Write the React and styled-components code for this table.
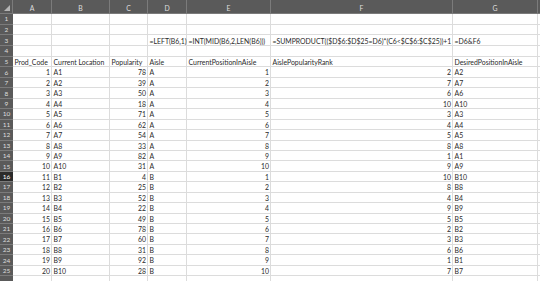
import React from "react";
import styled, { createGlobalStyle } from "styled-components";

const Global = createGlobalStyle`
  html, body {
    margin: 0;
    padding: 0;
    background: #ffffff;
    overflow: hidden;
  }
`;

const columns = ["A", "B", "C", "D", "E", "F", "G", ""];
const widths = [13, 39, 58, 38, 39, 84, 182, 85, 10];

const data = [
  [1, "A1", 78, "A", 1, 2, "A2"],
  [2, "A2", 39, "A", 2, 7, "A7"],
  [3, "A3", 50, "A", 3, 6, "A6"],
  [4, "A4", 18, "A", 4, 10, "A10"],
  [5, "A5", 71, "A", 5, 3, "A3"],
  [6, "A6", 62, "A", 6, 4, "A4"],
  [7, "A7", 54, "A", 7, 5, "A5"],
  [8, "A8", 33, "A", 8, 8, "A8"],
  [9, "A9", 82, "A", 9, 1, "A1"],
  [10, "A10", 31, "A", 10, 9, "A9"],
  [11, "B1", 4, "B", 1, 10, "B10"],
  [12, "B2", 25, "B", 2, 8, "B8"],
  [13, "B3", 52, "B", 3, 4, "B4"],
  [14, "B4", 22, "B", 4, 9, "B9"],
  [15, "B5", 49, "B", 5, 5, "B5"],
  [16, "B6", 78, "B", 6, 2, "B2"],
  [17, "B7", 60, "B", 7, 3, "B3"],
  [18, "B8", 31, "B", 8, 6, "B6"],
  [19, "B9", 92, "B", 9, 1, "B1"],
  [20, "B10", 28, "B", 10, 7, "B7"],
];

const top = [
  [],
  [],
  ["", "", "", "=LEFT(B6,1)", "=INT(MID(B6,2,LEN(B6)))", "=SUMPRODUCT(($D$6:$D$25=D6)*(C6<$C$6:$C$25))+1", "=D6&F6"],
  [],
  ["Prod_Code", "Current Location", "Popularity", "Aisle", "CurrentPositionInAisle", "AislePopularityRank", "DesiredPositionInAisle"],
];

const rows = [...top, ...data, []];

const Sheet = styled.div`
  display: grid;
  grid-template-columns: ${widths.map((w) => `${w}px`).join(" ")};
  grid-template-rows: 14px repeat(5, 10.7px) repeat(21, 10.45px);
  width: 540px;
  height: 281px;
  overflow: hidden;
  font-family: Lato, "Open Sans", "Liberation Sans", sans-serif;
  font-size: 6.9px;
  color: #2a2a2a;
`;

const Corner = styled.div`
  position: relative;
  background: #5a5a5a;
  border-right: 1px solid #7b7b7b;
  border-bottom: 1px solid #7b7b7b;

  &::after {
    content: "";
    position: absolute;
    right: 2px;
    bottom: 2px;
    border-left: 6px solid transparent;
    border-bottom: 6px solid #b5b5b5;
  }
`;

const ColHead = styled.div`
  background: #5a5a5a;
  color: #dedede;
  display: flex;
  align-items: center;
  justify-content: center;
  border-right: 1px solid #7b7b7b;
  border-bottom: 1px solid #7b7b7b;
  padding-top: 3px;
  box-sizing: border-box;
`;

const RowHead = styled.div`
  background: ${(p) => (p.active ? "#2b2b2b" : "#5a5a5a")};
  color: ${(p) => (p.active ? "#ffffff" : "#dedede")};
  display: flex;
  align-items: center;
  justify-content: center;
  border-bottom: 1px solid #7b7b7b;
  box-sizing: border-box;
  font-size: 6.5px;
`;

const Cell = styled.div`
  display: flex;
  align-items: flex-end;
  justify-content: ${(p) => (p.num ? "flex-end" : "flex-start")};
  padding: 0 1px 0.5px 1.5px;
  border-right: 1px solid #dcdcdc;
  border-bottom: 1px solid #dcdcdc;
  box-sizing: border-box;
  white-space: nowrap;
  overflow: visible;
  line-height: 1;
  min-width: 0;
`;

const App = () => (
  <>
    <Global />
    <Sheet>
      <Corner />
      {columns.map((c, i) => (
        <ColHead key={i}>{c}</ColHead>
      ))}
      {rows.map((r, ri) => (
        <React.Fragment key={ri}>
          <RowHead active={ri + 1 === 16}>{ri < 25 ? ri + 1 : ""}</RowHead>
          {columns.map((_, ci) => {
            const v = r[ci];
            return (
              <Cell key={ci} num={typeof v === "number"}>
                {v ?? ""}
              </Cell>
            );
          })}
        </React.Fragment>
      ))}
    </Sheet>
  </>
);

export default App;
